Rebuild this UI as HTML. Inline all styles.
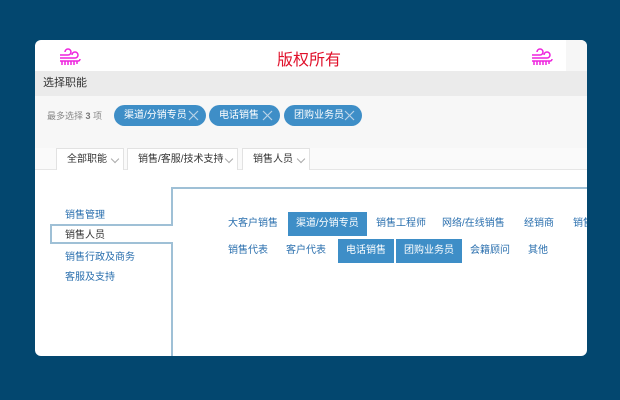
<!DOCTYPE html>
<html><head><meta charset="utf-8"><style>
*{margin:0;padding:0;box-sizing:border-box}
body{width:620px;height:400px;background:#03476f;position:relative;overflow:hidden;font-family:"Liberation Sans","Noto Sans CJK SC",sans-serif;font-size:10px}
.a{position:absolute;white-space:nowrap}
#card{position:absolute;left:35px;top:40px;width:552px;height:316px;background:#fff;border-radius:6px;overflow:hidden}
.pill{position:absolute;top:65px;height:21px;border-radius:11px;background:#3e8ec7;color:#fff;line-height:21px;padding-left:10px;font-size:10px;white-space:nowrap}
.pill svg{position:absolute;right:7px;top:5px}
.tab{position:absolute;top:108px;height:22px;background:#fff;border:1px solid #e2e2e2;border-bottom:none;line-height:21px;color:#333;font-size:10px;padding-left:10px;white-space:nowrap}
.tab i{position:absolute;right:5px;top:7px;width:6px;height:6px;border-right:1px solid #aaa;border-bottom:1px solid #aaa;transform:rotate(45deg)}
.lm{position:absolute;left:30px;color:#2a6fae;font-size:10px;white-space:nowrap}
.it{position:absolute;height:24px;line-height:24px;color:#2a6fae;font-size:10px;white-space:nowrap}
.sel{background:#3e8ec7;color:#fff;padding:0 8px}
</style></head><body>
<div id="card">
 <div class="a" style="left:531px;top:0;width:21px;height:31px;background:#f6f6f6"></div>
 <svg class="a" style="left:23px;top:7px" width="24" height="22" viewBox="0 0 24 22" fill="none" stroke="#ee22dd" stroke-width="1.5">
  <path d="M7 5a3 3 0 1 1 3 3H2"/><path d="M14 8a3 3 0 1 1 3 3H2"/><path d="M2 14h18a2 2 0 0 0 2-2"/><path d="M4 14v4M7 14v4M10 14v4M13 14v4M16 14v4M19 14v3"/>
 </svg>
 <svg class="a" style="left:495px;top:7px" width="24" height="22" viewBox="0 0 24 22" fill="none" stroke="#ee22dd" stroke-width="1.5">
  <path d="M7 5a3 3 0 1 1 3 3H2"/><path d="M14 8a3 3 0 1 1 3 3H2"/><path d="M2 14h18a2 2 0 0 0 2-2"/><path d="M4 14v4M7 14v4M10 14v4M13 14v4M16 14v4M19 14v3"/>
 </svg>
 <div class="a" style="left:242px;top:6px;font-size:16px;color:#e0102a">版权所有</div>
 <div class="a" style="left:0;top:31px;width:552px;height:25px;background:#ebebeb;line-height:25px;padding-left:8px;font-size:11px;color:#333">选择职能</div>
 <div class="a" style="left:0;top:56px;width:552px;height:52px;background:#f7f7f7"></div>
 <div class="a" style="left:0;top:108px;width:552px;height:22px;background:#fafafa;border-bottom:1px solid #e6e6e6"></div>
 <div class="a" style="left:12px;top:69px;color:#888;font-size:9px">最多选择 <b style="color:#777">3</b> 项</div>
 <div class="pill" style="left:79px;width:92px">渠道/分销专员<svg width="11" height="11"><path d="M1 1L10 10M10 1L1 10" stroke="#b8d3e8" stroke-width="1.2"/></svg></div>
 <div class="pill" style="left:174px;width:71px">电话销售<svg width="11" height="11"><path d="M1 1L10 10M10 1L1 10" stroke="#b8d3e8" stroke-width="1.2"/></svg></div>
 <div class="pill" style="left:249px;width:78px">团购业务员<svg width="11" height="11"><path d="M1 1L10 10M10 1L1 10" stroke="#b8d3e8" stroke-width="1.2"/></svg></div>
 <div class="tab" style="left:21px;width:68px">全部职能<i></i></div>
 <div class="tab" style="left:92px;width:111px">销售/客服/技术支持<i></i></div>
 <div class="tab" style="left:207px;width:68px">销售人员<i></i></div>
 <div class="a" style="left:137px;top:147px;width:420px;height:2px;background:#9fc0d6"></div>
 <div class="a" style="left:136px;top:147px;width:2px;height:38px;background:#9fc0d6"></div>
 <div class="a" style="left:136px;top:203px;width:2px;height:120px;background:#9fc0d6"></div>
 <div class="a" style="left:15px;top:184px;width:123px;height:20px;border:2px solid #9fc0d6;border-right:none;background:#fff"></div>
 <div class="lm" style="top:166px">销售管理</div>
 <div class="lm" style="top:186px;color:#333">销售人员</div>
 <div class="lm" style="top:208px">销售行政及商务</div>
 <div class="lm" style="top:228px">客服及支持</div>
 <div class="it" style="left:193px;top:172px">大客户销售</div>
 <div class="it sel" style="left:253px;top:172px">渠道/分销专员</div>
 <div class="it" style="left:341px;top:172px">销售工程师</div>
 <div class="it" style="left:407px;top:172px">网络/在线销售</div>
 <div class="it" style="left:489px;top:172px">经销商</div>
 <div class="it" style="left:538px;top:172px">销售</div>
 <div class="it" style="left:193px;top:199px">销售代表</div>
 <div class="it" style="left:251px;top:199px">客户代表</div>
 <div class="it sel" style="left:303px;top:199px">电话销售</div>
 <div class="it sel" style="left:361px;top:199px">团购业务员</div>
 <div class="it" style="left:435px;top:199px">会籍顾问</div>
 <div class="it" style="left:493px;top:199px">其他</div>
</div>
</body></html>
